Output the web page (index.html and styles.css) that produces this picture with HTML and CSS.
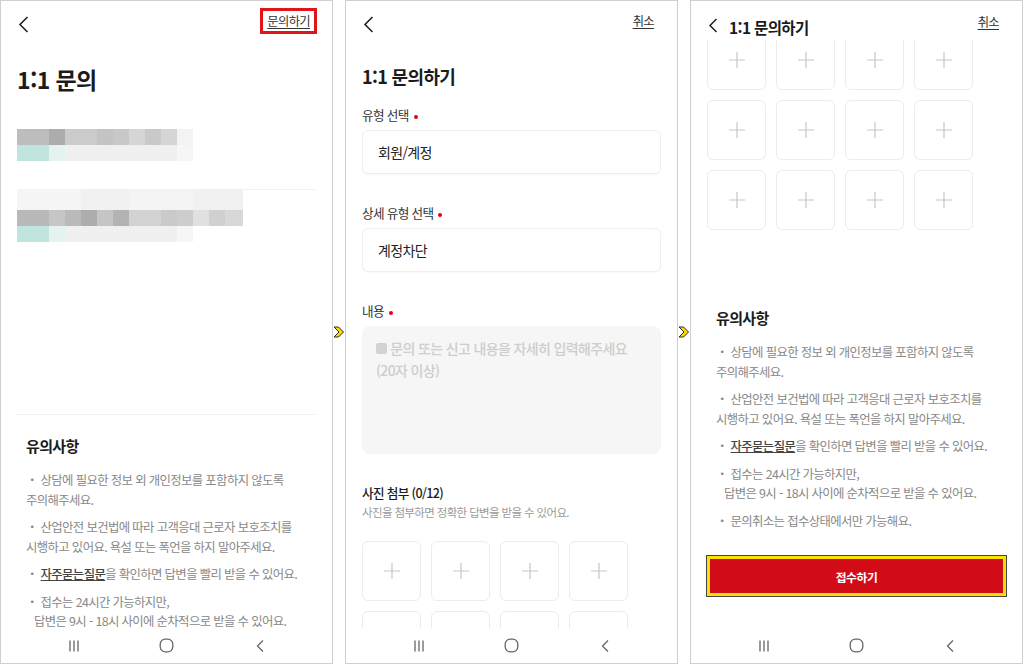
FILE: index.html
```html
<!DOCTYPE html>
<html lang="ko">
<head>
    <meta charset="UTF-8">
    <meta name="viewport" content="width=device-width, initial-scale=1.0">
    <title>1:1 문의하기</title>
    <link rel="stylesheet" href="styles.css">
</head>
<body>
    <div class="screens">

        <!-- 1. 문의 내역 -->
        <section class="phone">
            <header class="topbar">
                <svg class="back" width="11" height="17" viewBox="0 0 11 17"><path d="M9.5 1 L2 8.5 L9.5 16" fill="none" stroke="#222" stroke-width="1.6"/></svg>
                <a class="top-link marked">문의하기</a>
            </header>
            <div class="content">
                <h1 class="page-title">1:1 문의</h1>
                <div class="history">
                    <div class="history-item">
                        <div class="blur blur-a1"></div>
                        <div class="blur blur-a2"></div>
                    </div>
                    <div class="history-item history-next">
                        <div class="blur blur-b0"></div>
                        <div class="blur blur-b1"></div>
                        <div class="blur blur-a2"></div>
                    </div>
                </div>
                <div class="notice notice-lined">
                    <h3>유의사항</h3>
                    <p>・ 상담에 필요한 정보 외 개인정보를 포함하지 않도록<br>주의해주세요.</p>
                    <p>・ 산업안전 보건법에 따라 고객응대 근로자 보호조치를<br>시행하고 있어요. 욕설 또는 폭언을 하지 말아주세요.</p>
                    <p>・ <a class="faq">자주묻는질문</a>을 확인하면 답변을 빨리 받을 수 있어요.</p>
                    <p>・ 접수는 24시간 가능하지만,<br><span class="indent">답변은 9시 - 18시 사이에 순차적으로 받을 수 있어요.</span></p>
                    <p>・ 문의취소는 접수상태에서만 가능해요.</p>
                </div>
            </div>
            <nav class="navbar">
                <span class="nav-key"><svg width="14" height="14" viewBox="0 0 14 14"><path d="M3 1.5v11M7 1.5v11M11 1.5v11" stroke="#666" stroke-width="1.3"/></svg></span>
                <span class="nav-key"><svg width="15" height="15" viewBox="0 0 15 15"><rect x="1.2" y="1.2" width="12.6" height="12.6" rx="5" fill="none" stroke="#666" stroke-width="1.3"/></svg></span>
                <span class="nav-key"><svg width="10" height="14" viewBox="0 0 10 14"><path d="M8 1.5 L2.5 7 L8 12.5" fill="none" stroke="#666" stroke-width="1.3"/></svg></span>
            </nav>
        </section>

        <!-- 2. 문의 작성 -->
        <section class="phone">
            <header class="topbar">
                <svg class="back" width="11" height="17" viewBox="0 0 11 17"><path d="M9.5 1 L2 8.5 L9.5 16" fill="none" stroke="#222" stroke-width="1.6"/></svg>
                <a class="top-link">취소</a>
            </header>
            <div class="content">
                <h2 class="form-title">1:1 문의하기</h2>
                <div class="field">
                    <div class="field-label">유형 선택<i class="req"></i></div>
                    <div class="select-box">회원/계정</div>
                </div>
                <div class="field">
                    <div class="field-label">상세 유형 선택<i class="req"></i></div>
                    <div class="select-box">계정차단</div>
                </div>
                <div class="field">
                    <div class="field-label">내용<i class="req"></i></div>
                    <div class="text-box"><span class="square"></span> 문의 또는 신고 내용을 자세히 입력해주세요<br>(20자 이상)</div>
                </div>
                <h4 class="photo-title">사진 첨부 (0/12)</h4>
                <p class="photo-hint">사진을 첨부하면 정확한 답변을 받을 수 있어요.</p>
                <div class="tiles">
                    <div class="tile"><svg width="18" height="18" viewBox="0 0 18 18"><path d="M9 1v16M1 9h16" stroke="#c6c6c6" stroke-width="1.2"/></svg></div>
                    <div class="tile"><svg width="18" height="18" viewBox="0 0 18 18"><path d="M9 1v16M1 9h16" stroke="#c6c6c6" stroke-width="1.2"/></svg></div>
                    <div class="tile"><svg width="18" height="18" viewBox="0 0 18 18"><path d="M9 1v16M1 9h16" stroke="#c6c6c6" stroke-width="1.2"/></svg></div>
                    <div class="tile"><svg width="18" height="18" viewBox="0 0 18 18"><path d="M9 1v16M1 9h16" stroke="#c6c6c6" stroke-width="1.2"/></svg></div>
                    <div class="tile"></div>
                    <div class="tile"></div>
                    <div class="tile"></div>
                    <div class="tile"></div>
                </div>
            </div>
            <nav class="navbar">
                <span class="nav-key"><svg width="14" height="14" viewBox="0 0 14 14"><path d="M3 1.5v11M7 1.5v11M11 1.5v11" stroke="#666" stroke-width="1.3"/></svg></span>
                <span class="nav-key"><svg width="15" height="15" viewBox="0 0 15 15"><rect x="1.2" y="1.2" width="12.6" height="12.6" rx="5" fill="none" stroke="#666" stroke-width="1.3"/></svg></span>
                <span class="nav-key"><svg width="10" height="14" viewBox="0 0 10 14"><path d="M8 1.5 L2.5 7 L8 12.5" fill="none" stroke="#666" stroke-width="1.3"/></svg></span>
            </nav>
        </section>

        <!-- 3. 스크롤 후 접수 -->
        <section class="phone">
            <header class="topbar topbar-fixed">
                <div class="topbar-left">
                    <svg class="back-small" width="10" height="15" viewBox="0 0 10 15"><path d="M8.5 1 L2 7.5 L8.5 14" fill="none" stroke="#222" stroke-width="1.5"/></svg>
                    <span class="bar-title">1:1 문의하기</span>
                </div>
                <a class="top-link">취소</a>
            </header>
            <div class="content content-scrolled">
                <div class="tiles">
                    <div class="tile"><svg width="18" height="18" viewBox="0 0 18 18"><path d="M9 1v16M1 9h16" stroke="#c6c6c6" stroke-width="1.2"/></svg></div>
                    <div class="tile"><svg width="18" height="18" viewBox="0 0 18 18"><path d="M9 1v16M1 9h16" stroke="#c6c6c6" stroke-width="1.2"/></svg></div>
                    <div class="tile"><svg width="18" height="18" viewBox="0 0 18 18"><path d="M9 1v16M1 9h16" stroke="#c6c6c6" stroke-width="1.2"/></svg></div>
                    <div class="tile"><svg width="18" height="18" viewBox="0 0 18 18"><path d="M9 1v16M1 9h16" stroke="#c6c6c6" stroke-width="1.2"/></svg></div>
                    <div class="tile"><svg width="18" height="18" viewBox="0 0 18 18"><path d="M9 1v16M1 9h16" stroke="#c6c6c6" stroke-width="1.2"/></svg></div>
                    <div class="tile"><svg width="18" height="18" viewBox="0 0 18 18"><path d="M9 1v16M1 9h16" stroke="#c6c6c6" stroke-width="1.2"/></svg></div>
                    <div class="tile"><svg width="18" height="18" viewBox="0 0 18 18"><path d="M9 1v16M1 9h16" stroke="#c6c6c6" stroke-width="1.2"/></svg></div>
                    <div class="tile"><svg width="18" height="18" viewBox="0 0 18 18"><path d="M9 1v16M1 9h16" stroke="#c6c6c6" stroke-width="1.2"/></svg></div>
                    <div class="tile"><svg width="18" height="18" viewBox="0 0 18 18"><path d="M9 1v16M1 9h16" stroke="#c6c6c6" stroke-width="1.2"/></svg></div>
                    <div class="tile"><svg width="18" height="18" viewBox="0 0 18 18"><path d="M9 1v16M1 9h16" stroke="#c6c6c6" stroke-width="1.2"/></svg></div>
                    <div class="tile"><svg width="18" height="18" viewBox="0 0 18 18"><path d="M9 1v16M1 9h16" stroke="#c6c6c6" stroke-width="1.2"/></svg></div>
                    <div class="tile"><svg width="18" height="18" viewBox="0 0 18 18"><path d="M9 1v16M1 9h16" stroke="#c6c6c6" stroke-width="1.2"/></svg></div>
                </div>
                <div class="notice notice-plain">
                    <h3>유의사항</h3>
                    <p>・ 상담에 필요한 정보 외 개인정보를 포함하지 않도록<br>주의해주세요.</p>
                    <p>・ 산업안전 보건법에 따라 고객응대 근로자 보호조치를<br>시행하고 있어요. 욕설 또는 폭언을 하지 말아주세요.</p>
                    <p>・ <a class="faq">자주묻는질문</a>을 확인하면 답변을 빨리 받을 수 있어요.</p>
                    <p>・ 접수는 24시간 가능하지만,<br><span class="indent">답변은 9시 - 18시 사이에 순차적으로 받을 수 있어요.</span></p>
                    <p>・ 문의취소는 접수상태에서만 가능해요.</p>
                </div>
                <button class="submit">접수하기</button>
            </div>
            <nav class="navbar">
                <span class="nav-key"><svg width="14" height="14" viewBox="0 0 14 14"><path d="M3 1.5v11M7 1.5v11M11 1.5v11" stroke="#666" stroke-width="1.3"/></svg></span>
                <span class="nav-key"><svg width="15" height="15" viewBox="0 0 15 15"><rect x="1.2" y="1.2" width="12.6" height="12.6" rx="5" fill="none" stroke="#666" stroke-width="1.3"/></svg></span>
                <span class="nav-key"><svg width="10" height="14" viewBox="0 0 10 14"><path d="M8 1.5 L2.5 7 L8 12.5" fill="none" stroke="#666" stroke-width="1.3"/></svg></span>
            </nav>
        </section>

        <!-- 단계 화살표 -->
        <svg class="step-arrow step-arrow-1" width="12" height="12" viewBox="0 0 12 12"><polygon points="1,1 5.5,1 10.5,6 5.5,11 1,11 6,6" fill="#ffd900" stroke="#2a2a2a" stroke-width="1" stroke-linejoin="round"/></svg>
        <svg class="step-arrow step-arrow-2" width="12" height="12" viewBox="0 0 12 12"><polygon points="1,1 5.5,1 10.5,6 5.5,11 1,11 6,6" fill="#ffd900" stroke="#2a2a2a" stroke-width="1" stroke-linejoin="round"/></svg>
    </div>
</body>
</html>
```

FILE: styles.css
```css
* {
    box-sizing: border-box;
}
body {
    margin: 0;
    background: #fff;
    font-family: "Noto Sans CJK KR", "Noto Sans", sans-serif;
    color: #1b1b1b;
    letter-spacing: -0.04em;
}
.screens {
    position: relative;
    display: flex;
    gap: 12px;
    width: 1024px;
    height: 665px;
}
.phone {
    position: relative;
    width: 333px;
    height: 664px;
    border: 1px solid #cfcfcf;
    overflow: hidden;
    background: #fff;
}

/* 상단바 */
.topbar {
    display: flex;
    align-items: center;
    justify-content: space-between;
    height: 46px;
    padding: 0 15px 0 17px;
}
.back {
    display: block;
}
.top-link {
    font-size: 12.3px;
    line-height: 16px;
    padding: 4px 8px;
    margin-bottom: 7px;
    color: #333;
    text-decoration: underline;
    text-underline-offset: 2px;
}
.top-link.marked {
    border: 3px solid #e3131b;
    padding: 2px 4px;
}
.topbar-fixed {
    position: absolute;
    top: 0;
    left: 0;
    right: 0;
    z-index: 1;
    height: 39px;
    align-items: flex-start;
    background: #fff;
}
.topbar-fixed .top-link {
    margin: 9px 0 0;
}
.topbar-left {
    display: flex;
    align-items: flex-start;
}
.back-small {
    display: block;
    margin-top: 17px;
}
.bar-title {
    margin: 16px 0 0 11px;
    font-size: 15.5px;
    line-height: 20px;
    font-weight: 700;
}

.content {
    padding: 0 16px;
}
.content-scrolled {
    padding-top: 29px;
}

/* 1번 화면 */
.page-title {
    margin: 17px 0 0;
    font-size: 23px;
    line-height: 30px;
    font-weight: 700;
}
.history {
    margin-top: 35px;
}
.history-item {
    padding-bottom: 28px;
    border-bottom: 1px solid #f0f0f0;
}
.history-next {
    margin-top: -1px;
    padding-bottom: 0;
    border-bottom: 0;
}
.blur {
    height: 16px;
}
.blur-a1 {
    width: 176px;
    background: linear-gradient(to right, #bdbdbd 0 32px, #acacac 32px 48px, #cbcbcb 48px 80px, #c4c4c4 80px 96px, #c8c8c8 96px 112px, #d6d6d6 112px 128px, #c9c9c9 128px 144px, #d5d5d5 144px 160px, #f3f3f3 160px 176px);
}
.blur-a2 {
    width: 176px;
    background: linear-gradient(to right, #bfe5de 0 32px, #e4f3f0 32px 48px, #f0f0f0 48px 160px, #f6f6f6 160px 176px);
}
.blur-b0 {
    width: 226px;
    height: 21px;
    background: linear-gradient(to right, #f5f5f5 0 64px, #f1f1f1 64px 112px, #f4f4f4 112px 176px, #f1f1f1 176px 226px);
}
.blur-b1 {
    width: 226px;
    background: linear-gradient(to right, #b9b9b9 0 32px, #c6c6c6 32px 48px, #bababa 48px 64px, #adadad 64px 80px, #c5c5c5 80px 96px, #b3b3b3 96px 112px, #d2d2d2 112px 144px, #cacaca 144px 160px, #cdcdcd 160px 176px, #e0e0e0 176px 192px, #d0d0d0 192px 208px, #d8d8d8 208px 226px);
}

/* 유의사항 */
.notice {
    padding: 21px 9px 0;
}
.notice-lined {
    margin-top: 172px;
    border-top: 1px solid #efefef;
}
.notice-plain {
    margin-top: 57px;
}
.notice h3 {
    margin: 0 0 15px;
    font-size: 15px;
    line-height: 20px;
    font-weight: 700;
}
.notice p {
    margin: 0 0 8px;
    font-size: 12.4px;
    line-height: 19.5px;
    color: #888;
    white-space: nowrap;
}
.faq {
    color: #444;
    font-weight: 500;
    text-decoration: underline;
}
.indent {
    padding-left: 8px;
}

/* 2번 화면 폼 */
.form-title {
    margin: 16px 0 17px;
    font-size: 18px;
    line-height: 26px;
    font-weight: 700;
}
.field {
    margin-bottom: 30px;
}
.field-label {
    margin-bottom: 6px;
    font-size: 12.6px;
    line-height: 18px;
    color: #333;
}
.req {
    display: inline-block;
    width: 4px;
    height: 4px;
    margin-left: 5px;
    border-radius: 50%;
    background: #e60012;
    vertical-align: middle;
}
.select-box {
    display: flex;
    align-items: center;
    height: 44px;
    padding: 0 15px;
    border: 1px solid #eeeeee;
    border-radius: 6px;
    font-size: 14px;
    color: #222;
    box-shadow: 0 1px 2px rgba(0,0,0,0.03);
}
.text-box {
    height: 128px;
    padding: 11px 14px;
    border-radius: 8px;
    background: #f6f6f6;
    font-size: 14px;
    line-height: 22px;
    font-weight: 500;
    color: #cdcdcd;
}
.square {
    display: inline-block;
    width: 11px;
    height: 11px;
    border-radius: 2px;
    background: #d2d2d2;
}
.photo-title {
    margin: 0;
    font-size: 12.6px;
    line-height: 18px;
    font-weight: 500;
}
.photo-hint {
    margin: 2px 0 0;
    font-size: 11.5px;
    line-height: 16px;
    color: #9a9a9a;
}
.tiles {
    display: grid;
    grid-template-columns: repeat(4, 59px);
    gap: 10px;
    margin-top: 21px;
}
.content-scrolled .tiles {
    margin-top: 0;
}
.tile {
    display: flex;
    align-items: center;
    justify-content: center;
    height: 60px;
    border: 1px solid #ececec;
    border-radius: 6px;
}

/* 접수 버튼 */
.submit {
    display: block;
    width: 100%;
    height: 40px;
    margin-top: 25px;
    border: 3px solid #ffe100;
    background: #d20c17;
    box-shadow: 0 0 0 1px #444;
    color: #fff;
    font-family: inherit;
    font-size: 11.8px;
    font-weight: 700;
    letter-spacing: -0.04em;
}

/* 하단 내비게이션 */
.navbar {
    position: absolute;
    left: 0;
    right: 0;
    bottom: 0;
    display: flex;
    justify-content: center;
    align-items: center;
    height: 35px;
    background: #fff;
}
.nav-key {
    display: flex;
    justify-content: center;
    width: 93px;
}

.step-arrow {
    position: absolute;
    top: 326px;
}
.step-arrow-1 {
    left: 333px;
}
.step-arrow-2 {
    left: 678px;
}
```
